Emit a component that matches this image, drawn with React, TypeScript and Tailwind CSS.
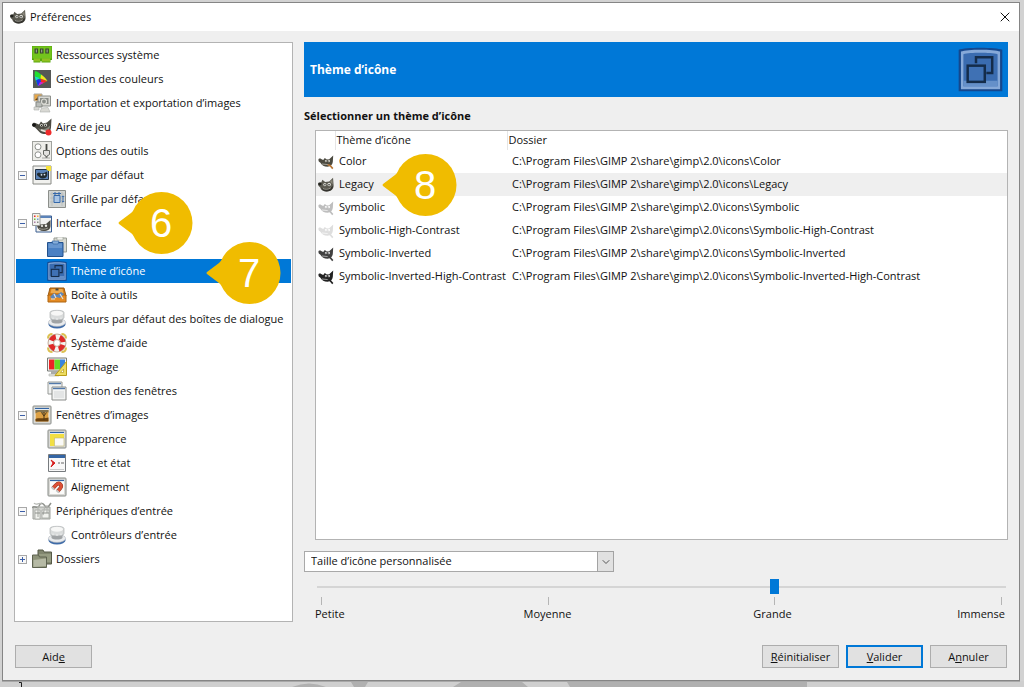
import { useState } from 'react';
import type { ReactNode } from 'react';
import { X, ChevronDown } from 'lucide-react';

function Svg({ children, className = 'size-5' }: { children: ReactNode; className?: string }) {
  return (
    <svg viewBox="0 0 20 20" className={`shrink-0 ${className}`} fill="none" aria-hidden="true">
      {children}
    </svg>
  );
}

function WilberFace({ className = 'size-4' }: { className?: string }) {
  return (
    <Svg className={className}>
      <path d="M4 7 5.500 3.500 9 6.200l5-.7L18.800 1l.7 9c.3 5-3 8-8.500 8-4.500 0-7.500-2-8.200-5L.5 11V8l2-1Z" fill="#5b5a51" />
      <path d="M4 13c4 2.500 11 2.500 15-2-.5 4.500-3.500 7-8 7-3.500 0-6-1.500-7-5Z" fill="#34332e" />
      <path d="m15 6 3-3 .4 6Z" fill="#8a887c" />
      <ellipse cx="8.500" cy="9.500" rx="1.900" ry="2" fill="#dcdcd4" />
      <ellipse cx="14" cy="9.300" rx="2.200" ry="2.200" fill="#dcdcd4" />
      <circle cx="8.700" cy="9.700" r=".9" fill="#222" />
      <circle cx="13.800" cy="9.600" r="1" fill="#222" />
      <ellipse cx="2.300" cy="8.800" rx="2.200" ry="1.800" fill="#24241f" />
      <path d="M6 14.300c3 1.600 7 1.300 10-.8" stroke="#b0afa4" strokeWidth="1" />
    </Svg>
  );
}

function WilberSide({ fill, eye, brush }: { fill: string; eye: string; brush: string }) {
  return (
    <Svg className="size-4">
      <path d="M.5 7.500c0-1.800 2-2.300 3.500-1.300L6.500 7.500l2-2.500 2.500 2L14 6.500 19 2l-.5 8c-.5 4-3 5.800-6.500 5.800-4.500 0-7-1.300-9-4.800L1 9.500Z" fill={fill} />
      <circle cx="9.800" cy="8.900" r="1.300" fill={eye} />
      <circle cx="13.600" cy="8.700" r="1.500" fill={eye} />
      <circle cx="9.900" cy="9" r=".6" fill={fill} />
      <circle cx="13.400" cy="8.900" r=".7" fill={fill} />
      <path d="m5 12.500 8 .8" stroke={eye} strokeWidth=".8" />
      <path d="m12 13.300 3 1 3.500 4" stroke={brush} strokeWidth="2" />
    </Svg>
  );
}

function IconThemeIcon({ className = 'size-5' }: { className?: string }) {
  return (
    <Svg className={className}>
      <path d="M.3 1.200C3 0 17 0 19.700 1.200v18.500H.3Z" fill="#15478d" />
      <path d="M1.300 2C4 .9 16 .9 18.700 2v16.800H1.300Z" fill="#86a9d8" />
      <path d="M2.400 3.200c3-.8 12-.8 15.200 0v14.200H2.400Z" fill="#3a6cb0" />
      <path d="M2.400 15h15.200v2.500H2.400Z" fill="#6590c9" />
      <path d="M8 7.200V4.600h7.200v7h-2.600" stroke="#142c4a" strokeWidth="1.100" />
      <rect x="4.300" y="8.300" width="7.600" height="7.200" fill="#3f71b4" stroke="#142c4a" strokeWidth="1.100" />
    </Svg>
  );
}

function Controller() {
  return (
    <Svg>
      <ellipse cx="10" cy="15" rx="8.600" ry="4.600" fill="#3e6ba8" />
      <ellipse cx="10" cy="13.400" rx="8.600" ry="4" fill="#e9ebed" stroke="#a6abb0" strokeWidth=".5" />
      <path d="M4.500 10h11v3c-2 2-9 2-11 0Z" fill="#a0a3a5" />
      <path d="M3 3.500C3 .6 17 .6 17 3.500v5c0 3.300-14 3.300-14 0Z" fill="#d9dbdb" stroke="#a5a8aa" strokeWidth=".6" />
      <ellipse cx="10" cy="4.200" rx="6" ry="2.500" fill="#f7f7f6" />
      <path d="M6 8.500v2M10 9v2M14 8.500v2" stroke="#f5f5f5" strokeWidth=".8" />
    </Svg>
  );
}

function Frame({ children }: { children?: ReactNode }) {
  return (
    <Svg>
      <rect x="1" y="1" width="18" height="18" rx=".8" fill="#d9d9d5" stroke="#868a86" />
      <rect x="3" y="3" width="14" height="14" fill="#fbfbfa" />
      <path d="M3 3.500h14" stroke="#3465a4" strokeWidth="1.200" />
      {children}
    </Svg>
  );
}

const icons: Record<string, ReactNode> = {
  system: (
    <Svg>
      <path d="M0 1h20v14h-1.500v2.500H9.500V16H8.500v1.500H1.500V15H0Z" fill="#58a80c" />
      <path d="M.5 1.500h19v12H.5Z" fill="#73c41d" />
      <path d="M2.500 3.500h3.600v5H2.500Zm5.400 0h3.600v5H7.900Zm5.400 0h3.600v5h-3.600Z" fill="#39472f" />
      <path d="M3.800 4.500h1v3h-1Zm5.400 0h1v3h-1Zm5.400 0h1v3h-1Z" fill="#a7b79b" />
      <path d="M3 13.500v3M5 13.500v3M7 13.500v3M11 13.500v3M13 13.500v3M15 13.500v3M17 13.500v3" stroke="#c9d938" />
    </Svg>
  ),
  colors: (
    <Svg>
      <path d="M1 1h18v18H1Z" fill="#555856" />
      <path d="M3 2c4 1 9 5.500 12 10l-9 5C3.500 13 2 7 3 2Z" fill="#22e02e" />
      <path d="m8 9 7.500 3-6 3.200Z" fill="#f12c24" />
      <path d="M9 5.500c2.800 1.800 5 4.200 6.500 6.500L8.500 9.500Z" fill="#f0e51d" />
      <path d="M4 10.500 8.500 10l.8 5.300L6 17.200C4.900 15 4.400 13 4 10.500Z" fill="#1c35ec" />
      <path d="m2.800 7.500 5 1.500L3.800 11.500Z" fill="#1cd7d0" />
      <path d="m8 13 4 .5-6 3.700Z" fill="#cc20d8" />
    </Svg>
  ),
  importExport: (
    <Svg>
      <path d="M2 1h8v7H2Z" fill="#e9a645" stroke="#aaa7a0" />
      <path d="M3 7 6 4l3 3Z" fill="#684214" />
      <path d="M6 3h12.500v10H6Z" fill="#d8d8d3" stroke="#8d908b" />
      <path d="M8 5h8.500v6H8Z" fill="#8a8d88" />
      <path d="M4 9h6v5H4Z" fill="#b9bcb8" stroke="#838681" />
      <circle cx="12" cy="8.500" r="2.500" stroke="#dcdcd6" strokeWidth="1.200" />
      <path d="M9.500 15 8 19h10l-2-4.500ZM2 14h5v3H2Z" fill="#d9d9d4" stroke="#adb0ab" strokeWidth=".6" />
    </Svg>
  ),
  playground: (
    <Svg>
      <path d="M.5 7.500c0-2 2-2.300 4-1L7 7.500l2-3 2 2 4-1 4.500-4-.5 9c-.5 4.500-3 7-7 6.500C7.500 16.500 6 13 3 10.500L1 9.500Z" fill="#4c4b43" />
      <ellipse cx="2" cy="8" rx="2" ry="1.800" fill="#171715" />
      <path d="M6 11c3 2.500 8 1.500 12-2.500 0 4-2.500 6.500-6 6.500-3-.5-4.500-1.500-6-4Z" fill="#87857a" />
      <circle cx="9.500" cy="8.300" r="1.300" fill="#dfdfd7" />
      <circle cx="13.500" cy="8" r="1.600" fill="#dfdfd7" />
      <circle cx="9.600" cy="8.400" r=".6" fill="#111" />
      <circle cx="13.400" cy="8.200" r=".7" fill="#111" />
      <path d="m9 13 6 2" stroke="#e8e6dd" strokeWidth="1.400" />
      <circle cx="16.500" cy="15.500" r="3" fill="#ef2b2b" />
    </Svg>
  ),
  tools: (
    <Svg>
      <rect x=".5" y=".5" width="19" height="19" fill="#edede9" stroke="#a0a29e" />
      <circle cx="6" cy="5.800" r="3" fill="#fff" stroke="#8f928e" />
      <circle cx="6" cy="13.800" r="3" fill="#fff" stroke="#8f928e" />
      <path d="M14.500 3v14" stroke="#444642" strokeWidth="1.800" />
      <path d="M11.500 9.500h6v4l-3 2-3-2Z" fill="#e2e2df" stroke="#656863" />
      <path d="M10 17h8" stroke="#a8aaa6" />
    </Svg>
  ),
  image: (
    <Svg>
      <path d="M1 1h18v18H1Z" fill="#f1f1ee" stroke="#888a85" />
      <path d="M3.500 4.500h13v10h-13Z" fill="#5b83b7" stroke="#263445" />
      <path d="m5 8.500 2-1 2 1 3-.5L15 6.500l.3 3.500c-.3 2.500-2.300 3.500-4.800 3.500C8 13.500 7 11.500 5 10Z" fill="#222b30" />
      <circle cx="9.500" cy="9.800" r=".9" fill="#d9e5f0" />
      <circle cx="12.500" cy="9.600" r=".9" fill="#d9e5f0" />
      <path d="M14 1h5v5h-2.500L14 4Z" fill="#f8e33a" />
    </Svg>
  ),
  grid: (
    <Svg>
      <path d="M1.500 1.500h17v17h-17Z" fill="#d1d4d2" stroke="#8c8f8b" />
      <path d="M3 5h14M3 9h14M3 13h14M5 3v14M15 3v14" stroke="#b2b8b7" strokeWidth=".7" />
      <path d="M7 6.500h6v7H7Z" fill="#a9c5e5" stroke="#3468aa" />
      <path d="M8 3v3.500M12 3v3.500M6 4.500h8M16 7v6m-1.200-5L16 6.800 17.200 8m-2.400 4 1.200 1.200L17.200 12" stroke="#3468aa" />
    </Svg>
  ),
  interface: (
    <Svg>
      <path d="M4 3h15.500v16H4Z" fill="#f2f2f0" stroke="#3b5e91" />
      <path d="M4 4h15" stroke="#5b83b9" strokeWidth="2" />
      <path d="m5 11.500 2-1 2 1 5-.5L18.500 7v6c0 3-2.500 5-7 5-3.500 0-5.500-1.500-6.500-5Z" fill="#4d4c44" />
      <circle cx="10" cy="13" r="1.100" fill="#f0f0eb" />
      <circle cx="14" cy="12.800" r="1.200" fill="#f0f0eb" />
      <path d="M7 15.500c3 1.200 6 1 9-.5" stroke="#b0afa4" strokeWidth=".8" />
      <path d="M.5.5H8v12H.5Z" fill="#f2f2ef" stroke="#9a9b97" />
      <path d="M2 2.500h1.500V4H2Z" fill="#ef2929" />
      <path d="M5 2.500h1.500V4H5Z" fill="#fcaf3e" />
      <path d="M2 5.500h1.500V7H2Z" fill="#73b933" />
      <path d="M5 5.500h1.500V7H5Z" fill="#729fcf" />
      <path d="M2 8.500h1.500V10H2Z" fill="#ad7fa8" />
      <path d="M5 8.500h1.500V10H5Z" fill="#888a85" />
    </Svg>
  ),
  theme: (
    <Svg>
      <path d="M7 1h12.500v14H7Z" fill="#d7d9d2" stroke="#999d94" />
      <path d="M10 0h6v3h-6Z" fill="#f4f4f1" stroke="#999d94" strokeWidth=".6" />
      <path d="M.5 5.500h15.500V19.500H.5Z" fill="#4a80c3" stroke="#23518d" />
      <path d="M1.500 6.500h13.500v4.500H1.500Z" fill="#6796cf" />
      <path d="M5 4h7l-1 3H6Z" fill="#87aedb" stroke="#2e5e9c" strokeWidth=".6" />
    </Svg>
  ),
  iconTheme: <IconThemeIcon />,
  toolbox: (
    <Svg>
      <path d="M3 3h14l2 8H1Z" fill="#d37d16" stroke="#9b580f" />
      <path d="M4.500 4h11l1 4h-13Z" fill="#edaa4e" />
      <path d="M1 10h18v7H1Z" fill="#e58b22" stroke="#ae6410" />
      <path d="m3 12 4-4 3 2 4-3 3 2-4 4-4-1-3 2Z" fill="#5d87bb" />
      <path d="m7 9 2 4M13 9l3 5M4 14h4" stroke="#e2e2e0" strokeWidth="1.200" />
      <path d="M8.500 3.500h3v2h-3Z" fill="#454743" />
    </Svg>
  ),
  controller: <Controller />,
  help: (
    <Svg>
      <path d="M1 5.500C1 2.500 2.500 1 5.500 1M14.500 1C17.500 1 19 2.500 19 5.500M1 14.500c0 3 1.500 4.500 4.500 4.500M14.500 19c3 0 4.500-1.500 4.500-4.500" stroke="#dcc050" strokeWidth="2" />
      <circle cx="10" cy="10" r="6.200" stroke="#f4f3ef" strokeWidth="5.600" />
      <circle cx="10" cy="10" r="6.200" stroke="#df2929" strokeWidth="5.200" strokeDasharray="5.740 4" strokeDashoffset="-2" />
      <circle cx="10" cy="10" r="9" stroke="#a98670" strokeWidth=".7" />
      <circle cx="10" cy="10" r="3.400" fill="#fff" stroke="#a98670" strokeWidth=".7" />
    </Svg>
  ),
  display: (
    <Svg>
      <path d="M.5 1h19v13H.5Z" fill="#f4f4f2" stroke="#777a76" />
      <path d="M2 2.500h5.500v10H2Z" fill="#ed2525" />
      <path d="M7.500 2.500H13v10H7.500Z" fill="#66dc24" />
      <path d="M13 2.500h5v10h-5Z" fill="#3985dd" />
      <path d="M4 14h7v3H4Z" fill="#a9aba8" />
      <path d="M2 17h10v2H2Z" fill="#e5e5e2" stroke="#a9aba8" strokeWidth=".6" />
      <path d="M19.500 4.500v14H8Z" fill="#eddc60" stroke="#b99d19" />
      <path d="M16.500 12v3.500h-3Z" fill="#fff" stroke="#b99d19" strokeWidth=".7" />
    </Svg>
  ),
  windows: (
    <Svg>
      <path d="M1 1h14v12H1Z" fill="#f1f2f1" stroke="#969996" />
      <path d="M2 2.500h12" stroke="#5379ab" strokeWidth="1.400" />
      <path d="M5 6h14v13H5Z" fill="#f3f4f3" stroke="#8b8e8b" />
      <path d="M6 7.500h12" stroke="#5379ab" strokeWidth="1.400" />
      <path d="M7 10h10v7H7Z" fill="#e3e5e5" />
    </Svg>
  ),
  imageWindow: (
    <Frame>
      <path d="M3.500 5h13v11.500h-13Z" fill="#dda043" />
      <path d="M3.500 5h13v2.500c-3-1-5 1.500-7 0s-4 0-6 1Z" fill="#80704c" />
      <path d="M3.500 14c3-1.500 6 0 13-1.500v4h-13Z" fill="#6c430f" />
      <path d="M12 7v8M9.500 7.500l2.500 3.500 2.500-3.500" stroke="#4d3a1c" />
    </Frame>
  ),
  appearance: (
    <Frame>
      <path d="M3 5h14v12H3Z" fill="#f2df43" />
      <path d="M7.500 9H17v8H7.500Z" fill="#fafaf8" stroke="#c1b76e" strokeWidth=".6" />
    </Frame>
  ),
  title: (
    <Svg>
      <path d="M1.500 1.500h17v17h-17Z" fill="#f8f8f8" stroke="#777b7e" />
      <path d="M2 3.500h16" stroke="#3465a4" strokeWidth="3" />
      <path d="m4 7 4 3-4 4 2-4Z" fill="#e02020" stroke="#d51f1f" />
      <path d="M11 10h2m1 0h3" stroke="#666" strokeWidth="1.200" />
      <path d="M3 16.500h14" stroke="#c9cbcc" />
    </Svg>
  ),
  snap: (
    <Frame>
      <path d="M5.700 11.500 9 8C12.500 4.500 16 8.500 13.300 11.300L10.500 14.500" stroke="#8d3420" strokeWidth="3.800" />
      <path d="M6 11.200 9 8C12.500 4.500 16 8.500 13.300 11.300L10.700 14.300" stroke="#dd5036" strokeWidth="2.800" />
      <path d="m5.200 12 1.300-1.400M10 15.100l1.200-1.400" stroke="#c5c8c7" strokeWidth="3.400" />
    </Frame>
  ),
  input: (
    <Svg>
      <path d="M1 6h17v12H1Z" fill="#d1d3cf" stroke="#9fa29d" />
      <path d="M3 9h5v9H3Zm7 0h7v8h-7Z" fill="#f1f2ee" stroke="#a4a7a2" strokeWidth=".8" />
      <path d="M0 7c2-4 5 2 7-2s4-3 6 0 4 0 6-3" stroke="#8e918c" strokeWidth="1.500" />
      <path d="M2 2c2 3 5-1 8 1M6 5v11M13 5l-2 9M15 4v8" stroke="#b6b8b4" strokeWidth="1.300" />
      <path d="M3 12h5M10 12h7" stroke="#8e918c" />
    </Svg>
  ),
  folders: (
    <Svg>
      <path d="M6 1h5l1 2h7.500v12H6Z" fill="#81866f" stroke="#545846" />
      <path d="M7 5h12v8H7Z" fill="#969c82" />
      <path d="M.5 6h6l1 2h7v10.500H.5Z" fill="#8f947b" stroke="#5e6350" />
      <path d="M1.500 11 14 9.500V17l-12.500 1Z" fill="#b6baa5" />
    </Svg>
  ),
};

type Node = { id: string; label: string; icon: string; child?: boolean; expander?: 'open' | 'closed'; step?: number };

const nodes: Node[] = [
  { id: 'system', label: 'Ressources système', icon: 'system' },
  { id: 'colors', label: 'Gestion des couleurs', icon: 'colors' },
  { id: 'io', label: 'Importation et exportation d’images', icon: 'importExport' },
  { id: 'playground', label: 'Aire de jeu', icon: 'playground' },
  { id: 'tools', label: 'Options des outils', icon: 'tools' },
  { id: 'image', label: 'Image par défaut', icon: 'image', expander: 'open' },
  { id: 'grid', label: 'Grille par défaut', icon: 'grid', child: true },
  { id: 'interface', label: 'Interface', icon: 'interface', expander: 'open', step: 6 },
  { id: 'theme', label: 'Thème', icon: 'theme', child: true },
  { id: 'iconTheme', label: 'Thème d’icône', icon: 'iconTheme', child: true, step: 7 },
  { id: 'toolbox', label: 'Boîte à outils', icon: 'toolbox', child: true },
  { id: 'dialogs', label: 'Valeurs par défaut des boîtes de dialogue', icon: 'controller', child: true },
  { id: 'help', label: 'Système d’aide', icon: 'help', child: true },
  { id: 'display', label: 'Affichage', icon: 'display', child: true },
  { id: 'windows', label: 'Gestion des fenêtres', icon: 'windows', child: true },
  { id: 'imageWindows', label: 'Fenêtres d’images', icon: 'imageWindow', expander: 'open' },
  { id: 'appearance', label: 'Apparence', icon: 'appearance', child: true },
  { id: 'title', label: 'Titre et état', icon: 'title', child: true },
  { id: 'snap', label: 'Alignement', icon: 'snap', child: true },
  { id: 'input', label: 'Périphériques d’entrée', icon: 'input', expander: 'open' },
  { id: 'controllers', label: 'Contrôleurs d’entrée', icon: 'controller', child: true },
  { id: 'folders', label: 'Dossiers', icon: 'folders', expander: 'closed' },
];

const themes = [
  { name: 'Color', icon: <WilberSide fill="#4c4a40" eye="#d8d7cf" brush="#b87534" /> },
  { name: 'Legacy', icon: <WilberFace /> },
  { name: 'Symbolic', icon: <WilberSide fill="#bebebe" eye="#fff" brush="#bebebe" /> },
  { name: 'Symbolic-High-Contrast', icon: <WilberSide fill="#dedede" eye="#fff" brush="#dedede" /> },
  { name: 'Symbolic-Inverted', icon: <WilberSide fill="#414141" eye="#ddd" brush="#414141" /> },
  { name: 'Symbolic-Inverted-High-Contrast', icon: <WilberSide fill="#222" eye="#ddd" brush="#222" /> },
];

function Step({ n, className }: { n: number; className: string }) {
  return (
    <span className={`pointer-events-none absolute z-10 flex h-16 w-[75px] items-center justify-end ${className}`}>
      <svg viewBox="0 0 75 64" className="absolute inset-0 size-full" aria-hidden="true">
        <circle cx="43.500" cy="32" r="31" fill="#f0bc00" />
        <path d="M1 31Q0 32 1 33L13 42Q18 46 21 53L30 32 21 11Q18 18 13 22Z" fill="#f0bc00" />
      </svg>
      <span className="relative w-16 text-center font-['Liberation_Sans',sans-serif] text-[40px] leading-none text-white">{n}</span>
    </span>
  );
}

function Expander({ state }: { state: 'open' | 'closed' }) {
  return (
    <button type="button" aria-label={state === 'open' ? 'Réduire' : 'Développer'} className="size-[9px] shrink-0">
      <svg viewBox="0 0 9 9" className="size-full" aria-hidden="true">
        <rect x=".5" y=".5" width="8" height="8" fill="#f8f8f8" stroke="#a8a8a8" />
        <path d={state === 'open' ? 'M2 4.500h5' : 'M2 4.500h5M4.500 2v5'} stroke="#3c5fa8" />
      </svg>
    </button>
  );
}

const button = 'h-[23px] w-[77px] bg-[#e1e1e1] text-center leading-5';

export default function App() {
  const [page, setPage] = useState('iconTheme');
  const [theme, setTheme] = useState('Legacy');
  const [size, setSize] = useState(2);

  return (
    <div className="flex min-h-screen flex-col bg-[#d2d2d2] pt-0.5 font-['Open_Sans','Noto_Sans',sans-serif] text-[11px] text-[#111]">
      <section className="mr-1 ml-0.5 flex flex-1 flex-col border border-[#858585] bg-[#efefef]">
        <header className="flex h-7 items-center bg-white pr-1.5 pl-[7px]">
          <WilberFace />
          <h1 className="ml-1">Préférences</h1>
          <button type="button" aria-label="Fermer" className="ml-auto">
            <X className="size-4" strokeWidth={1.5} />
          </button>
        </header>

        <main className="flex flex-1 gap-[11px] px-[11px] pt-[11px]">
          <nav aria-label="Catégories" className="w-[279px] shrink-0 border border-[#b3b3b3] bg-white">
            <ul>
              {nodes.map((node) => (
                <li
                  key={node.id}
                  className={`relative mx-px flex h-6 items-center gap-[5px] pl-0.5 ${page === node.id ? 'bg-[#0078d7] text-white' : ''}`}
                >
                  {node.expander ? <Expander state={node.expander} /> : <span className={node.child ? 'w-6' : 'w-[9px]'} />}
                  <button type="button" onClick={() => setPage(node.id)} className="flex items-center gap-1 whitespace-nowrap">
                    {icons[node.icon]}
                    {node.label}
                  </button>
                  {node.step === 6 && <Step n={6} className="-top-5 left-[102px]" />}
                  {node.step === 7 && <Step n={7} className="-top-[18px] left-[190px]" />}
                </li>
              ))}
            </ul>
          </nav>

          <div className="flex min-w-0 flex-1 flex-col">
            <div className="flex h-[55px] items-center justify-between bg-[#0078d7] pr-[5px] pl-1.5 text-white">
              <h2 className="text-xs font-bold">Thème d’icône</h2>
              <IconThemeIcon className="size-[45px]" />
            </div>
            <h3 className="mt-2.5 mb-[5px] leading-[18px] font-bold">Sélectionner un thème d’icône</h3>

            <div className="ml-[11px] flex-1 border border-[#b3b3b3] bg-white">
              <table className="w-full table-fixed border-collapse text-left whitespace-nowrap">
                <colgroup>
                  <col className="w-[19px]" />
                  <col className="w-[172px]" />
                  <col />
                </colgroup>
                <thead>
                  <tr className="h-[19px]">
                    <th className="p-0" aria-label="Aperçu" />
                    <th className="border-l border-[#e5e5e5] p-0 pl-px font-normal">Thème d’icône</th>
                    <th className="border-l border-[#e5e5e5] p-0 pl-px font-normal">Dossier</th>
                  </tr>
                </thead>
                <tbody>
                  {themes.map((t) => (
                    <tr key={t.name} onClick={() => setTheme(t.name)} className={`h-[23px] ${theme === t.name ? 'bg-[#efefef]' : ''}`}>
                      <td className="p-0 pl-0.5">{t.icon}</td>
                      <td className="relative p-0 pl-1">
                        {t.name}
                        {t.name === 'Legacy' && <Step n={8} className="-top-5 left-[47px]" />}
                      </td>
                      <td className="p-0 pl-[5px]">{`C:\\Program Files\\GIMP 2\\share\\gimp\\2.0\\icons\\${t.name}`}</td>
                    </tr>
                  ))}
                </tbody>
              </table>
            </div>

            <div className="relative mt-[11px] h-[21px] w-[310px]">
              <select aria-label="Taille des icônes" className="size-full appearance-none border border-[#a9a9a9] bg-white pl-1.5">
                <option>Taille d’icône personnalisée</option>
              </select>
              <span className="pointer-events-none absolute inset-y-0 right-0 flex w-[17px] items-center justify-center border border-[#a3a3a3] bg-[#e1e1e1]">
                <ChevronDown className="size-3 text-[#555]" />
              </span>
            </div>

            <div className="mt-[7px] ml-[13px] pr-0.5">
              <input
                type="range"
                aria-label="Taille d’icône"
                min={0}
                max={3}
                value={size}
                onChange={(e) => setSize(Number(e.target.value))}
                className="block h-4 w-full appearance-none bg-transparent [&::-webkit-slider-runnable-track]:h-0.5 [&::-webkit-slider-runnable-track]:bg-[#d5d5d5] [&::-webkit-slider-thumb]:-mt-[7px] [&::-webkit-slider-thumb]:h-[15px] [&::-webkit-slider-thumb]:w-[9px] [&::-webkit-slider-thumb]:appearance-none [&::-webkit-slider-thumb]:bg-[#0078d7]"
              />
              <div className="mt-0.5 flex h-2 justify-between px-1" aria-hidden="true">
                <span className="w-px bg-[#b5b5b5]" />
                <span className="w-px bg-[#b5b5b5]" />
                <span className="w-px bg-[#b5b5b5]" />
                <span className="w-px bg-[#b5b5b5]" />
              </div>
            </div>
            <div className="mr-[3px] ml-[11px] grid grid-cols-[120px_1fr_1fr_120px] pt-px text-center leading-4">
              <span className="text-left">Petite</span>
              <span>Moyenne</span>
              <span>Grande</span>
              <span className="text-right">Immense</span>
            </div>
          </div>
        </main>

        <footer className="flex gap-[7px] px-3 pt-[23px] pb-3">
          <button type="button" className={`${button} mr-auto border border-[#adadad]`}>
            Aid<u>e</u>
          </button>
          <button type="button" className={`${button} border border-[#adadad]`}>
            <u>R</u>éinitialiser
          </button>
          <button type="button" className={`${button} border-2 border-[#0078d7]`}>
            <u>V</u>alider
          </button>
          <button type="button" className={`${button} border border-[#adadad]`}>
            A<u>n</u>nuler
          </button>
        </footer>
      </section>
      <svg viewBox="0 0 1024 6" preserveAspectRatio="none" className="h-1.5 w-full shrink-0" aria-hidden="true">
        <path d="M0 0h1024v6H0Z" fill="#cfcfcf" />
        <path d="M2 0h1018v1H2Z" fill="#a8a8a8" />
        <path d="M19 1.500h2.500V6" fill="none" stroke="#222" />
        <path d="M292 6Q309-1 326 6ZM351 1h17l-3 5h-11ZM453 6l8-5h61l6 5ZM567 1h240v5H570Z" fill="#b0b0b0" />
      </svg>
    </div>
  );
}
